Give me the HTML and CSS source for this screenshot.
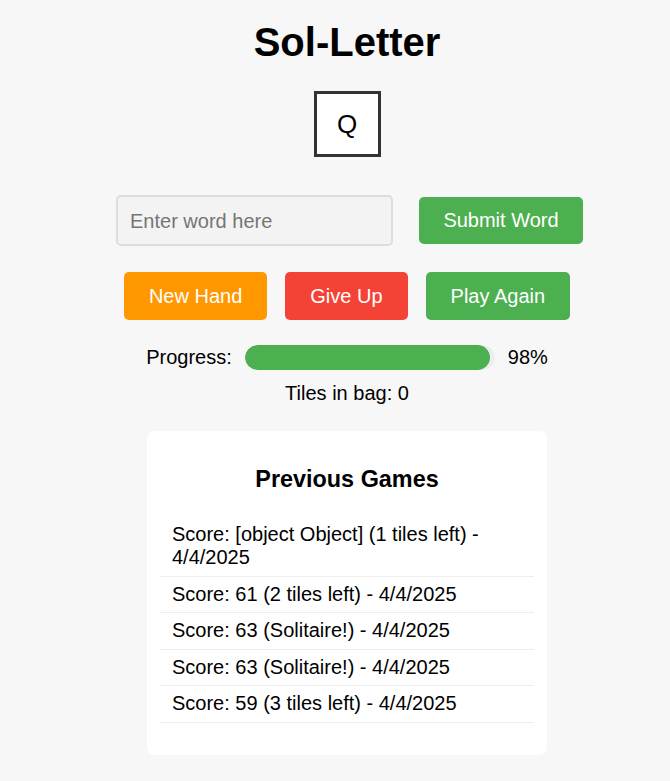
FILE: index.html
```html
<!DOCTYPE html>
<html lang="en">
<head>
<meta charset="utf-8">
<title>Sol-Letter</title>
<link rel="stylesheet" href="styles.css">
</head>
<body>
<div class="app">
  <h1 class="title">Sol-Letter</h1>
  <div class="hand">
    <div class="tile">Q</div>
  </div>
  <div class="word-row">
    <input class="word-input" type="text" placeholder="Enter word here">
    <button class="btn btn-submit">Submit Word</button>
  </div>
  <div class="action-row">
    <button class="btn btn-action btn-orange">New Hand</button>
    <button class="btn btn-action btn-red">Give Up</button>
    <button class="btn btn-action btn-green">Play Again</button>
  </div>
  <div class="progress-row">
    <span class="progress-label">Progress:</span>
    <div class="progress-track"><div class="progress-fill" style="width: 98%"></div></div>
    <span class="progress-value">98%</span>
  </div>
  <div class="bag">Tiles in bag: 0</div>
  <div class="history">
    <h3 class="history-title">Previous Games</h3>
    <ul class="history-list">
      <li>Score: [object Object] (1 tiles left) - 4/4/2025</li>
      <li>Score: 61 (2 tiles left) - 4/4/2025</li>
      <li>Score: 63 (Solitaire!) - 4/4/2025</li>
      <li>Score: 63 (Solitaire!) - 4/4/2025</li>
      <li>Score: 59 (3 tiles left) - 4/4/2025</li>
    </ul>
  </div>
</div>
</body>
</html>
```

FILE: styles.css
```css
html, body {
  margin: 0;
  padding: 0;
  background: #f7f7f7;
}

body {
  font-family: "Liberation Sans", Arial, sans-serif;
  font-size: 20px;
  color: #000;
}

.app {
  padding-left: 24px;
  display: flex;
  flex-direction: column;
  align-items: center;
  text-align: center;
}

.title {
  font-size: 40px;
  line-height: 46px;
  font-weight: bold;
  margin: 19px 0 26px;
}

.hand {
  display: flex;
  gap: 10px;
  justify-content: center;
}

.tile {
  width: 61px;
  height: 60px;
  border: 3px solid #333;
  background: #fff;
  font-size: 26px;
  display: flex;
  align-items: center;
  justify-content: center;
}

.word-row {
  margin-top: 38px;
  margin-left: 5px;
  display: flex;
  align-items: center;
  gap: 26px;
}

.word-input {
  box-sizing: border-box;
  width: 277px;
  height: 51px;
  padding: 1px 12px 0;
  border: 2px solid #ddd;
  border-radius: 5px;
  background: #f3f3f3;
  font-family: "Liberation Sans", Arial, sans-serif;
  font-size: 20px;
  color: #000;
  outline: none;
}

.word-input::placeholder {
  color: #757575;
}

.btn {
  border: none;
  border-radius: 5px;
  color: #fff;
  font-family: "Liberation Sans", Arial, sans-serif;
  font-size: 20px;
  cursor: pointer;
}

.btn-submit {
  background: #4caf50;
  width: 164px;
  height: 47px;
  padding: 0;
  line-height: 23px;
}

.action-row {
  margin-top: 26px;
  display: flex;
  gap: 18px;
}

.btn-action {
  height: 48px;
  padding: 0 25px;
  line-height: 23px;
}

.btn-orange { background: #ff9800; }
.btn-red { background: #f44336; }
.btn-green { background: #4caf50; }

.progress-row {
  margin-top: 25px;
  display: flex;
  align-items: center;
  gap: 13px;
  height: 25px;
}

.progress-track {
  width: 250px;
  height: 25px;
  border-radius: 12.5px;
  background: #eeeeee;
  overflow: hidden;
}

.progress-fill {
  height: 100%;
  background: #4caf50;
  border-radius: 12.5px;
}

.bag {
  margin-top: 12px;
  line-height: 23px;
}

.history {
  box-sizing: border-box;
  margin-top: 26px;
  width: 400px;
  padding: 12px 13px;
  background: #fff;
  border-radius: 8px;
}

.history-title {
  font-size: 23.4px;
  line-height: 27px;
  font-weight: bold;
  margin: 23.4px 0;
}

.history-list {
  list-style: none;
  margin: 0 0 20px;
  padding: 0;
  text-align: left;
}

.history-list li {
  padding: 6px 12px;
  line-height: 23.5px;
  border-bottom: 1px solid #eee;
}
```
